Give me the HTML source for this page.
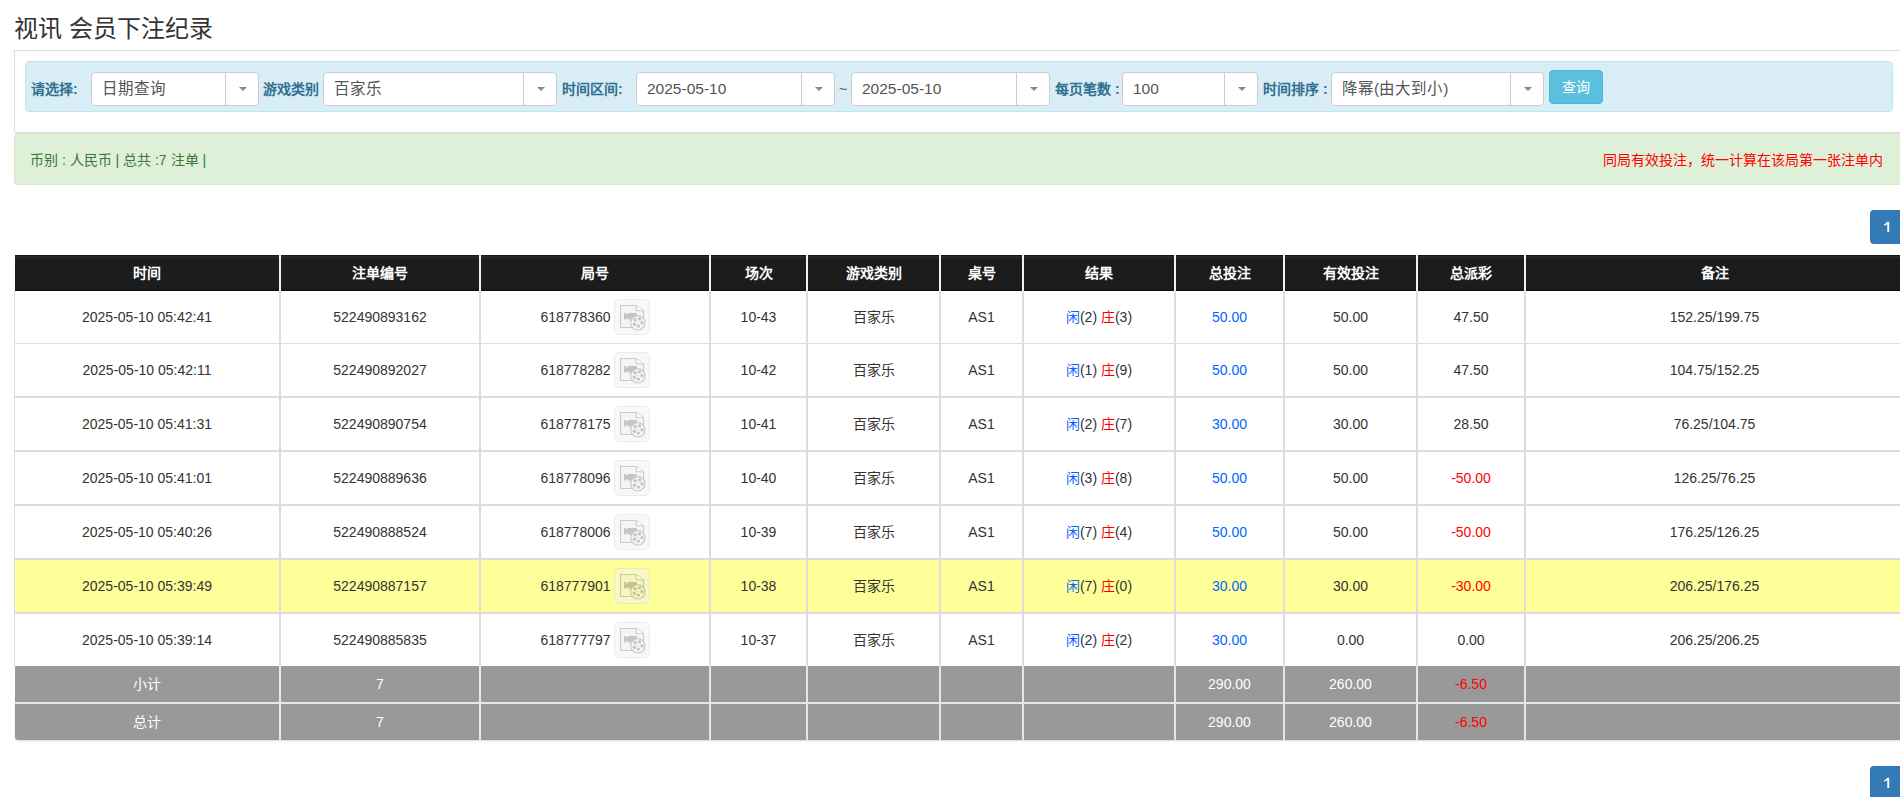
<!DOCTYPE html>
<html lang="zh-CN"><head><meta charset="utf-8">
<style>
*{box-sizing:border-box}
html,body{margin:0;padding:0;background:#fff;width:1900px;height:797px;overflow:hidden;position:relative;font-family:"Liberation Sans",sans-serif;font-size:14px;color:#333}
div,span{position:absolute}
.title{left:14px;top:12px;font-size:24px;line-height:34px;color:#333;white-space:nowrap}
.panel{left:14px;top:50px;width:1920px;height:83px;border:1px solid #ddd;background:#fff}
.bar{left:25px;top:61px;width:1868px;height:51px;background:#d9edf7;border:1px solid #bce8f1;border-radius:4px}
.lbl{top:79px;line-height:20px;font-size:14px;font-weight:bold;color:#31708f;white-space:nowrap}
.sel{top:72px;height:34px;background:#fff;border:1px solid #ccc;border-radius:4px}
.sel .st{left:10px;top:6px;line-height:20px;font-size:15.5px;color:#555;white-space:nowrap}
.sel .div{top:0;width:1px;height:32px;background:#ccc}
.sel .arr{top:14px;width:0;height:0;border-left:4px solid transparent;border-right:4px solid transparent;border-top:4px solid #888}
.btn{left:1549px;top:70px;width:54px;height:34px;background:#5bc0de;border:1px solid #46b8da;border-radius:4px;color:#fff;font-size:14px;line-height:32px;text-align:center}
.alert{left:14px;top:133px;width:1920px;height:52px;background:#dff0d8;border:1px solid #d6e9c6;border-radius:4px}
.at{left:30px;top:150px;font-size:14px;line-height:20px;color:#3c763d;white-space:nowrap}
.ar{right:17px;top:150px;font-size:14px;line-height:20px;color:#ff0000;white-space:nowrap}
.pg{left:1870px;width:40px;height:34px;background:#337ab7;border-radius:4px;color:#fff;font-size:14px;line-height:34px;padding-left:14px}
.thead{background:linear-gradient(#161616 0,#161616 1px,#2a2a2a 1px,#252525 3px,#1c1c1c 4px,#1c1c1c 35px,#0c0c0c 35px)}
.gb2{border-bottom-left-radius:3px;box-shadow:0 1px 2px rgba(0,0,0,.15)}
.c{text-align:center;white-space:nowrap;font-size:14px;color:#333}
.c span{position:static}
.th{color:#fff;font-weight:bold}
.vl{width:2px;background:#ddd}
.hv{background:#f0f0f0}
.sv{background:#e6e6e6}
.hl{left:14px;width:1896px;background:#ddd}
.sl{background:#e6e6e6}
.sm{color:#fff}
.b{color:#0a62ff}
.bn{color:#0066ff}
.rd{color:#f00}
.c .ico{display:inline-block;vertical-align:middle;position:relative;top:-1px;width:36px;height:36px;margin-left:3px;border:1px solid #d9d9d9;border-radius:5px;background:#f3f3f3;opacity:.5;line-height:0}
.ico svg{position:absolute;left:-1px;top:-1px}
</style></head><body>
<div class="title">视讯 会员下注纪录</div>
<div class="panel"></div>
<div class="bar"></div>
<div class="lbl" style="left:31px">请选择:</div>
<div class="sel" style="left:91px;width:168px"><span class="st">日期查询</span><span class="div" style="left:133px"></span><span class="arr" style="left:146.5px"></span></div>
<div class="lbl" style="left:263px">游戏类别</div>
<div class="sel" style="left:323px;width:234px"><span class="st">百家乐</span><span class="div" style="left:199px"></span><span class="arr" style="left:212.5px"></span></div>
<div class="lbl" style="left:562px">时间区间:</div>
<div class="sel" style="left:636px;width:199px"><span class="st">2025-05-10</span><span class="div" style="left:164px"></span><span class="arr" style="left:177.5px"></span></div>
<div class="lbl" style="left:839px;font-weight:normal;color:#555">~</div>
<div class="sel" style="left:851px;width:199px"><span class="st">2025-05-10</span><span class="div" style="left:164px"></span><span class="arr" style="left:177.5px"></span></div>
<div class="lbl" style="left:1055px">每页笔数 :</div>
<div class="sel" style="left:1122px;width:136px"><span class="st">100</span><span class="div" style="left:101px"></span><span class="arr" style="left:114.5px"></span></div>
<div class="lbl" style="left:1263px">时间排序 :</div>
<div class="sel" style="left:1331px;width:213px"><span class="st">降幂(由大到小)</span><span class="div" style="left:178px"></span><span class="arr" style="left:191.5px"></span></div>
<div class="btn">查询</div>
<div class="alert"></div>
<div class="at">币别 : 人民币 | 总共 :7 注单 |</div>
<div class="ar">同局有效投注，统一计算在该局第一张注单内</div>
<div class="pg" style="top:210px"><svg width="40" height="34" style="position:absolute;left:0;top:0"><path d="M17.3 11.8H19.2V22H17.3V14.3Q15.9 15.3 14.1 15.7V14.4Q16.2 13.5 17.3 11.8Z" fill="#fff"/></svg></div>
<div class="thead" style="left:15px;top:255px;width:1895px;height:36px"></div>
<div class="vl hv" style="left:279px;top:255px;height:36px"></div>
<div class="vl hv" style="left:479px;top:255px;height:36px"></div>
<div class="vl hv" style="left:709px;top:255px;height:36px"></div>
<div class="vl hv" style="left:806px;top:255px;height:36px"></div>
<div class="vl hv" style="left:939px;top:255px;height:36px"></div>
<div class="vl hv" style="left:1022px;top:255px;height:36px"></div>
<div class="vl hv" style="left:1174px;top:255px;height:36px"></div>
<div class="vl hv" style="left:1283px;top:255px;height:36px"></div>
<div class="vl hv" style="left:1416px;top:255px;height:36px"></div>
<div class="vl hv" style="left:1524px;top:255px;height:36px"></div>
<div class="c th" style="left:15px;top:255px;width:264px;height:36px;line-height:36px">时间</div>
<div class="c th" style="left:281px;top:255px;width:198px;height:36px;line-height:36px">注单编号</div>
<div class="c th" style="left:481px;top:255px;width:228px;height:36px;line-height:36px">局号</div>
<div class="c th" style="left:711px;top:255px;width:95px;height:36px;line-height:36px">场次</div>
<div class="c th" style="left:808px;top:255px;width:131px;height:36px;line-height:36px">游戏类别</div>
<div class="c th" style="left:941px;top:255px;width:81px;height:36px;line-height:36px">桌号</div>
<div class="c th" style="left:1024px;top:255px;width:150px;height:36px;line-height:36px">结果</div>
<div class="c th" style="left:1176px;top:255px;width:107px;height:36px;line-height:36px">总投注</div>
<div class="c th" style="left:1285px;top:255px;width:131px;height:36px;line-height:36px">有效投注</div>
<div class="c th" style="left:1418px;top:255px;width:106px;height:36px;line-height:36px">总派彩</div>
<div class="c th" style="left:1526px;top:255px;width:377px;height:36px;line-height:36px">备注</div>
<div class="band" style="left:14px;top:291px;width:1896px;height:52px;background:#fff"></div>
<div class="hl" style="top:343px;height:1px"></div>
<div class="band" style="left:14px;top:344px;width:1896px;height:52px;background:#fff"></div>
<div class="hl" style="top:396px;height:2px"></div>
<div class="band" style="left:14px;top:398px;width:1896px;height:52px;background:#fff"></div>
<div class="hl" style="top:450px;height:2px"></div>
<div class="band" style="left:14px;top:452px;width:1896px;height:52px;background:#fff"></div>
<div class="hl" style="top:504px;height:2px"></div>
<div class="band" style="left:14px;top:506px;width:1896px;height:52px;background:#fff"></div>
<div class="hl" style="top:558px;height:2px"></div>
<div class="band" style="left:14px;top:560px;width:1896px;height:52px;background:#ffff99"></div>
<div class="hl" style="top:612px;height:2px"></div>
<div class="band" style="left:14px;top:614px;width:1896px;height:52px;background:#fff"></div>
<div class="c " style="left:15px;top:291px;width:264px;height:52px;line-height:52px">2025-05-10 05:42:41</div>
<div class="c " style="left:281px;top:291px;width:198px;height:52px;line-height:52px">522490893162</div>
<div class="c " style="left:481px;top:291px;width:228px;height:52px;line-height:52px"><span class="jn">618778360</span><span class="ico"><svg width="36" height="36" viewBox="0 0 36 36"><path d="M6.5 6.5H22.3L29.6 11.8V28.5H6.5Z" fill="#ededed" stroke="#979797" stroke-width="1.1"/><path d="M22.3 6.5V11.8H29.6" fill="#fbfbfb" stroke="#979797" stroke-width="1.1"/><path d="M10 14H11.3L13.6 15.8V14H22.8V20.6H13.6V18.8L11.3 20.6H10Z" fill="#8d8d8d"/><circle cx="23.85" cy="23.85" r="7.2" fill="#ededed" stroke="#939393" stroke-width="1.1"/><circle cx="21.1" cy="20.8" r="1.7" fill="#8d8d8d"/><circle cx="25.6" cy="19.9" r="1.7" fill="#8d8d8d"/><circle cx="28.0" cy="23.7" r="1.7" fill="#8d8d8d"/><circle cx="24.4" cy="27.1" r="1.7" fill="#8d8d8d"/><circle cx="20.5" cy="25.2" r="1.7" fill="#8d8d8d"/><circle cx="23.85" cy="23.5" r="0.5" fill="#8d8d8d"/></svg></span></div>
<div class="c " style="left:711px;top:291px;width:95px;height:52px;line-height:52px">10-43</div>
<div class="c " style="left:808px;top:291px;width:131px;height:52px;line-height:52px">百家乐</div>
<div class="c " style="left:941px;top:291px;width:81px;height:52px;line-height:52px">AS1</div>
<div class="c " style="left:1024px;top:291px;width:150px;height:52px;line-height:52px"><span class="b">闲</span>(2) <span class="rd">庄</span>(3)</div>
<div class="c " style="left:1176px;top:291px;width:107px;height:52px;line-height:52px"><span class="bn">50.00</span></div>
<div class="c " style="left:1285px;top:291px;width:131px;height:52px;line-height:52px">50.00</div>
<div class="c " style="left:1418px;top:291px;width:106px;height:52px;line-height:52px">47.50</div>
<div class="c " style="left:1526px;top:291px;width:377px;height:52px;line-height:52px">152.25/199.75</div>
<div class="c " style="left:15px;top:344px;width:264px;height:52px;line-height:52px">2025-05-10 05:42:11</div>
<div class="c " style="left:281px;top:344px;width:198px;height:52px;line-height:52px">522490892027</div>
<div class="c " style="left:481px;top:344px;width:228px;height:52px;line-height:52px"><span class="jn">618778282</span><span class="ico"><svg width="36" height="36" viewBox="0 0 36 36"><path d="M6.5 6.5H22.3L29.6 11.8V28.5H6.5Z" fill="#ededed" stroke="#979797" stroke-width="1.1"/><path d="M22.3 6.5V11.8H29.6" fill="#fbfbfb" stroke="#979797" stroke-width="1.1"/><path d="M10 14H11.3L13.6 15.8V14H22.8V20.6H13.6V18.8L11.3 20.6H10Z" fill="#8d8d8d"/><circle cx="23.85" cy="23.85" r="7.2" fill="#ededed" stroke="#939393" stroke-width="1.1"/><circle cx="21.1" cy="20.8" r="1.7" fill="#8d8d8d"/><circle cx="25.6" cy="19.9" r="1.7" fill="#8d8d8d"/><circle cx="28.0" cy="23.7" r="1.7" fill="#8d8d8d"/><circle cx="24.4" cy="27.1" r="1.7" fill="#8d8d8d"/><circle cx="20.5" cy="25.2" r="1.7" fill="#8d8d8d"/><circle cx="23.85" cy="23.5" r="0.5" fill="#8d8d8d"/></svg></span></div>
<div class="c " style="left:711px;top:344px;width:95px;height:52px;line-height:52px">10-42</div>
<div class="c " style="left:808px;top:344px;width:131px;height:52px;line-height:52px">百家乐</div>
<div class="c " style="left:941px;top:344px;width:81px;height:52px;line-height:52px">AS1</div>
<div class="c " style="left:1024px;top:344px;width:150px;height:52px;line-height:52px"><span class="b">闲</span>(1) <span class="rd">庄</span>(9)</div>
<div class="c " style="left:1176px;top:344px;width:107px;height:52px;line-height:52px"><span class="bn">50.00</span></div>
<div class="c " style="left:1285px;top:344px;width:131px;height:52px;line-height:52px">50.00</div>
<div class="c " style="left:1418px;top:344px;width:106px;height:52px;line-height:52px">47.50</div>
<div class="c " style="left:1526px;top:344px;width:377px;height:52px;line-height:52px">104.75/152.25</div>
<div class="c " style="left:15px;top:398px;width:264px;height:52px;line-height:52px">2025-05-10 05:41:31</div>
<div class="c " style="left:281px;top:398px;width:198px;height:52px;line-height:52px">522490890754</div>
<div class="c " style="left:481px;top:398px;width:228px;height:52px;line-height:52px"><span class="jn">618778175</span><span class="ico"><svg width="36" height="36" viewBox="0 0 36 36"><path d="M6.5 6.5H22.3L29.6 11.8V28.5H6.5Z" fill="#ededed" stroke="#979797" stroke-width="1.1"/><path d="M22.3 6.5V11.8H29.6" fill="#fbfbfb" stroke="#979797" stroke-width="1.1"/><path d="M10 14H11.3L13.6 15.8V14H22.8V20.6H13.6V18.8L11.3 20.6H10Z" fill="#8d8d8d"/><circle cx="23.85" cy="23.85" r="7.2" fill="#ededed" stroke="#939393" stroke-width="1.1"/><circle cx="21.1" cy="20.8" r="1.7" fill="#8d8d8d"/><circle cx="25.6" cy="19.9" r="1.7" fill="#8d8d8d"/><circle cx="28.0" cy="23.7" r="1.7" fill="#8d8d8d"/><circle cx="24.4" cy="27.1" r="1.7" fill="#8d8d8d"/><circle cx="20.5" cy="25.2" r="1.7" fill="#8d8d8d"/><circle cx="23.85" cy="23.5" r="0.5" fill="#8d8d8d"/></svg></span></div>
<div class="c " style="left:711px;top:398px;width:95px;height:52px;line-height:52px">10-41</div>
<div class="c " style="left:808px;top:398px;width:131px;height:52px;line-height:52px">百家乐</div>
<div class="c " style="left:941px;top:398px;width:81px;height:52px;line-height:52px">AS1</div>
<div class="c " style="left:1024px;top:398px;width:150px;height:52px;line-height:52px"><span class="b">闲</span>(2) <span class="rd">庄</span>(7)</div>
<div class="c " style="left:1176px;top:398px;width:107px;height:52px;line-height:52px"><span class="bn">30.00</span></div>
<div class="c " style="left:1285px;top:398px;width:131px;height:52px;line-height:52px">30.00</div>
<div class="c " style="left:1418px;top:398px;width:106px;height:52px;line-height:52px">28.50</div>
<div class="c " style="left:1526px;top:398px;width:377px;height:52px;line-height:52px">76.25/104.75</div>
<div class="c " style="left:15px;top:452px;width:264px;height:52px;line-height:52px">2025-05-10 05:41:01</div>
<div class="c " style="left:281px;top:452px;width:198px;height:52px;line-height:52px">522490889636</div>
<div class="c " style="left:481px;top:452px;width:228px;height:52px;line-height:52px"><span class="jn">618778096</span><span class="ico"><svg width="36" height="36" viewBox="0 0 36 36"><path d="M6.5 6.5H22.3L29.6 11.8V28.5H6.5Z" fill="#ededed" stroke="#979797" stroke-width="1.1"/><path d="M22.3 6.5V11.8H29.6" fill="#fbfbfb" stroke="#979797" stroke-width="1.1"/><path d="M10 14H11.3L13.6 15.8V14H22.8V20.6H13.6V18.8L11.3 20.6H10Z" fill="#8d8d8d"/><circle cx="23.85" cy="23.85" r="7.2" fill="#ededed" stroke="#939393" stroke-width="1.1"/><circle cx="21.1" cy="20.8" r="1.7" fill="#8d8d8d"/><circle cx="25.6" cy="19.9" r="1.7" fill="#8d8d8d"/><circle cx="28.0" cy="23.7" r="1.7" fill="#8d8d8d"/><circle cx="24.4" cy="27.1" r="1.7" fill="#8d8d8d"/><circle cx="20.5" cy="25.2" r="1.7" fill="#8d8d8d"/><circle cx="23.85" cy="23.5" r="0.5" fill="#8d8d8d"/></svg></span></div>
<div class="c " style="left:711px;top:452px;width:95px;height:52px;line-height:52px">10-40</div>
<div class="c " style="left:808px;top:452px;width:131px;height:52px;line-height:52px">百家乐</div>
<div class="c " style="left:941px;top:452px;width:81px;height:52px;line-height:52px">AS1</div>
<div class="c " style="left:1024px;top:452px;width:150px;height:52px;line-height:52px"><span class="b">闲</span>(3) <span class="rd">庄</span>(8)</div>
<div class="c " style="left:1176px;top:452px;width:107px;height:52px;line-height:52px"><span class="bn">50.00</span></div>
<div class="c " style="left:1285px;top:452px;width:131px;height:52px;line-height:52px">50.00</div>
<div class="c " style="left:1418px;top:452px;width:106px;height:52px;line-height:52px"><span class="rd">-50.00</span></div>
<div class="c " style="left:1526px;top:452px;width:377px;height:52px;line-height:52px">126.25/76.25</div>
<div class="c " style="left:15px;top:506px;width:264px;height:52px;line-height:52px">2025-05-10 05:40:26</div>
<div class="c " style="left:281px;top:506px;width:198px;height:52px;line-height:52px">522490888524</div>
<div class="c " style="left:481px;top:506px;width:228px;height:52px;line-height:52px"><span class="jn">618778006</span><span class="ico"><svg width="36" height="36" viewBox="0 0 36 36"><path d="M6.5 6.5H22.3L29.6 11.8V28.5H6.5Z" fill="#ededed" stroke="#979797" stroke-width="1.1"/><path d="M22.3 6.5V11.8H29.6" fill="#fbfbfb" stroke="#979797" stroke-width="1.1"/><path d="M10 14H11.3L13.6 15.8V14H22.8V20.6H13.6V18.8L11.3 20.6H10Z" fill="#8d8d8d"/><circle cx="23.85" cy="23.85" r="7.2" fill="#ededed" stroke="#939393" stroke-width="1.1"/><circle cx="21.1" cy="20.8" r="1.7" fill="#8d8d8d"/><circle cx="25.6" cy="19.9" r="1.7" fill="#8d8d8d"/><circle cx="28.0" cy="23.7" r="1.7" fill="#8d8d8d"/><circle cx="24.4" cy="27.1" r="1.7" fill="#8d8d8d"/><circle cx="20.5" cy="25.2" r="1.7" fill="#8d8d8d"/><circle cx="23.85" cy="23.5" r="0.5" fill="#8d8d8d"/></svg></span></div>
<div class="c " style="left:711px;top:506px;width:95px;height:52px;line-height:52px">10-39</div>
<div class="c " style="left:808px;top:506px;width:131px;height:52px;line-height:52px">百家乐</div>
<div class="c " style="left:941px;top:506px;width:81px;height:52px;line-height:52px">AS1</div>
<div class="c " style="left:1024px;top:506px;width:150px;height:52px;line-height:52px"><span class="b">闲</span>(7) <span class="rd">庄</span>(4)</div>
<div class="c " style="left:1176px;top:506px;width:107px;height:52px;line-height:52px"><span class="bn">50.00</span></div>
<div class="c " style="left:1285px;top:506px;width:131px;height:52px;line-height:52px">50.00</div>
<div class="c " style="left:1418px;top:506px;width:106px;height:52px;line-height:52px"><span class="rd">-50.00</span></div>
<div class="c " style="left:1526px;top:506px;width:377px;height:52px;line-height:52px">176.25/126.25</div>
<div class="c " style="left:15px;top:560px;width:264px;height:52px;line-height:52px">2025-05-10 05:39:49</div>
<div class="c " style="left:281px;top:560px;width:198px;height:52px;line-height:52px">522490887157</div>
<div class="c " style="left:481px;top:560px;width:228px;height:52px;line-height:52px"><span class="jn">618777901</span><span class="ico"><svg width="36" height="36" viewBox="0 0 36 36"><path d="M6.5 6.5H22.3L29.6 11.8V28.5H6.5Z" fill="#ededed" stroke="#979797" stroke-width="1.1"/><path d="M22.3 6.5V11.8H29.6" fill="#fbfbfb" stroke="#979797" stroke-width="1.1"/><path d="M10 14H11.3L13.6 15.8V14H22.8V20.6H13.6V18.8L11.3 20.6H10Z" fill="#8d8d8d"/><circle cx="23.85" cy="23.85" r="7.2" fill="#ededed" stroke="#939393" stroke-width="1.1"/><circle cx="21.1" cy="20.8" r="1.7" fill="#8d8d8d"/><circle cx="25.6" cy="19.9" r="1.7" fill="#8d8d8d"/><circle cx="28.0" cy="23.7" r="1.7" fill="#8d8d8d"/><circle cx="24.4" cy="27.1" r="1.7" fill="#8d8d8d"/><circle cx="20.5" cy="25.2" r="1.7" fill="#8d8d8d"/><circle cx="23.85" cy="23.5" r="0.5" fill="#8d8d8d"/></svg></span></div>
<div class="c " style="left:711px;top:560px;width:95px;height:52px;line-height:52px">10-38</div>
<div class="c " style="left:808px;top:560px;width:131px;height:52px;line-height:52px">百家乐</div>
<div class="c " style="left:941px;top:560px;width:81px;height:52px;line-height:52px">AS1</div>
<div class="c " style="left:1024px;top:560px;width:150px;height:52px;line-height:52px"><span class="b">闲</span>(7) <span class="rd">庄</span>(0)</div>
<div class="c " style="left:1176px;top:560px;width:107px;height:52px;line-height:52px"><span class="bn">30.00</span></div>
<div class="c " style="left:1285px;top:560px;width:131px;height:52px;line-height:52px">30.00</div>
<div class="c " style="left:1418px;top:560px;width:106px;height:52px;line-height:52px"><span class="rd">-30.00</span></div>
<div class="c " style="left:1526px;top:560px;width:377px;height:52px;line-height:52px">206.25/176.25</div>
<div class="c " style="left:15px;top:614px;width:264px;height:52px;line-height:52px">2025-05-10 05:39:14</div>
<div class="c " style="left:281px;top:614px;width:198px;height:52px;line-height:52px">522490885835</div>
<div class="c " style="left:481px;top:614px;width:228px;height:52px;line-height:52px"><span class="jn">618777797</span><span class="ico"><svg width="36" height="36" viewBox="0 0 36 36"><path d="M6.5 6.5H22.3L29.6 11.8V28.5H6.5Z" fill="#ededed" stroke="#979797" stroke-width="1.1"/><path d="M22.3 6.5V11.8H29.6" fill="#fbfbfb" stroke="#979797" stroke-width="1.1"/><path d="M10 14H11.3L13.6 15.8V14H22.8V20.6H13.6V18.8L11.3 20.6H10Z" fill="#8d8d8d"/><circle cx="23.85" cy="23.85" r="7.2" fill="#ededed" stroke="#939393" stroke-width="1.1"/><circle cx="21.1" cy="20.8" r="1.7" fill="#8d8d8d"/><circle cx="25.6" cy="19.9" r="1.7" fill="#8d8d8d"/><circle cx="28.0" cy="23.7" r="1.7" fill="#8d8d8d"/><circle cx="24.4" cy="27.1" r="1.7" fill="#8d8d8d"/><circle cx="20.5" cy="25.2" r="1.7" fill="#8d8d8d"/><circle cx="23.85" cy="23.5" r="0.5" fill="#8d8d8d"/></svg></span></div>
<div class="c " style="left:711px;top:614px;width:95px;height:52px;line-height:52px">10-37</div>
<div class="c " style="left:808px;top:614px;width:131px;height:52px;line-height:52px">百家乐</div>
<div class="c " style="left:941px;top:614px;width:81px;height:52px;line-height:52px">AS1</div>
<div class="c " style="left:1024px;top:614px;width:150px;height:52px;line-height:52px"><span class="b">闲</span>(2) <span class="rd">庄</span>(2)</div>
<div class="c " style="left:1176px;top:614px;width:107px;height:52px;line-height:52px"><span class="bn">30.00</span></div>
<div class="c " style="left:1285px;top:614px;width:131px;height:52px;line-height:52px">0.00</div>
<div class="c " style="left:1418px;top:614px;width:106px;height:52px;line-height:52px">0.00</div>
<div class="c " style="left:1526px;top:614px;width:377px;height:52px;line-height:52px">206.25/206.25</div>
<div class="band gb" style="left:15px;top:666px;width:1895px;height:36px;background:#999"></div>
<div class="band gb2" style="left:15px;top:704px;width:1895px;height:36px;background:#999"></div>
<div class="hl sl" style="top:702px;height:2px"></div>
<div class="c sm" style="left:15px;top:666px;width:264px;height:36px;line-height:36px">小计</div>
<div class="c sm" style="left:281px;top:666px;width:198px;height:36px;line-height:36px">7</div>
<div class="c sm" style="left:1176px;top:666px;width:107px;height:36px;line-height:36px">290.00</div>
<div class="c sm" style="left:1285px;top:666px;width:131px;height:36px;line-height:36px">260.00</div>
<div class="c sm" style="left:1418px;top:666px;width:106px;height:36px;line-height:36px"><span class="rd">-6.50</span></div>
<div class="c sm" style="left:15px;top:704px;width:264px;height:36px;line-height:36px">总计</div>
<div class="c sm" style="left:281px;top:704px;width:198px;height:36px;line-height:36px">7</div>
<div class="c sm" style="left:1176px;top:704px;width:107px;height:36px;line-height:36px">290.00</div>
<div class="c sm" style="left:1285px;top:704px;width:131px;height:36px;line-height:36px">260.00</div>
<div class="c sm" style="left:1418px;top:704px;width:106px;height:36px;line-height:36px"><span class="rd">-6.50</span></div>
<div class="vl" style="left:279px;top:291px;height:375px"></div>
<div class="vl sv" style="left:279px;top:666px;height:74px"></div>
<div class="vl" style="left:479px;top:291px;height:375px"></div>
<div class="vl sv" style="left:479px;top:666px;height:74px"></div>
<div class="vl" style="left:709px;top:291px;height:375px"></div>
<div class="vl sv" style="left:709px;top:666px;height:74px"></div>
<div class="vl" style="left:806px;top:291px;height:375px"></div>
<div class="vl sv" style="left:806px;top:666px;height:74px"></div>
<div class="vl" style="left:939px;top:291px;height:375px"></div>
<div class="vl sv" style="left:939px;top:666px;height:74px"></div>
<div class="vl" style="left:1022px;top:291px;height:375px"></div>
<div class="vl sv" style="left:1022px;top:666px;height:74px"></div>
<div class="vl" style="left:1174px;top:291px;height:375px"></div>
<div class="vl sv" style="left:1174px;top:666px;height:74px"></div>
<div class="vl" style="left:1283px;top:291px;height:375px"></div>
<div class="vl sv" style="left:1283px;top:666px;height:74px"></div>
<div class="vl" style="left:1416px;top:291px;height:375px"></div>
<div class="vl sv" style="left:1416px;top:666px;height:74px"></div>
<div class="vl" style="left:1524px;top:291px;height:375px"></div>
<div class="vl sv" style="left:1524px;top:666px;height:74px"></div>
<div class="vl" style="left:14px;top:291px;height:375px;width:1px"></div>
<div class="pg" style="top:766px"><svg width="40" height="34" style="position:absolute;left:0;top:0"><path d="M17.3 11.8H19.2V22H17.3V14.3Q15.9 15.3 14.1 15.7V14.4Q16.2 13.5 17.3 11.8Z" fill="#fff"/></svg></div>
</body></html>
